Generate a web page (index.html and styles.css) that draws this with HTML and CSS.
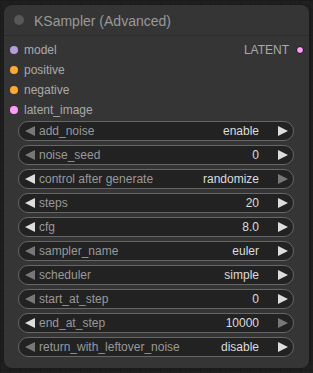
FILE: index.html
```html
<!DOCTYPE html>
<html>
<head>
<meta charset="utf-8">
<link rel="stylesheet" href="styles.css">
</head>
<body>
<div class="node">
  <div class="title"><span class="title-dot"></span><span class="title-text">KSampler (Advanced)</span></div>
  <div class="slots">
    <div class="slot-row">
      <div class="in"><span class="dot model"></span><span class="slot-label">model</span></div>
      <div class="out"><span class="slot-label">LATENT</span><span class="dot out-dot"></span></div>
    </div>
    <div class="slot-row"><div class="in"><span class="dot cond"></span><span class="slot-label">positive</span></div></div>
    <div class="slot-row"><div class="in"><span class="dot cond"></span><span class="slot-label">negative</span></div></div>
    <div class="slot-row"><div class="in"><span class="dot latent"></span><span class="slot-label">latent_image</span></div></div>
  </div>
  <div class="widgets">
    <div class="widget"><svg class="arr dim" viewBox="0 0 10 10"><polygon points="10,0 0,5 10,10"/></svg><span class="w-label">add_noise</span><span class="w-value">enable</span><svg class="arr" viewBox="0 0 10 10"><polygon points="0,0 10,5 0,10"/></svg></div>
    <div class="widget"><svg class="arr dim" viewBox="0 0 10 10"><polygon points="10,0 0,5 10,10"/></svg><span class="w-label">noise_seed</span><span class="w-value">0</span><svg class="arr" viewBox="0 0 10 10"><polygon points="0,0 10,5 0,10"/></svg></div>
    <div class="widget"><svg class="arr" viewBox="0 0 10 10"><polygon points="10,0 0,5 10,10"/></svg><span class="w-label">control after generate</span><span class="w-value">randomize</span><svg class="arr dim" viewBox="0 0 10 10"><polygon points="0,0 10,5 0,10"/></svg></div>
    <div class="widget"><svg class="arr" viewBox="0 0 10 10"><polygon points="10,0 0,5 10,10"/></svg><span class="w-label">steps</span><span class="w-value">20</span><svg class="arr" viewBox="0 0 10 10"><polygon points="0,0 10,5 0,10"/></svg></div>
    <div class="widget"><svg class="arr" viewBox="0 0 10 10"><polygon points="10,0 0,5 10,10"/></svg><span class="w-label">cfg</span><span class="w-value">8.0</span><svg class="arr" viewBox="0 0 10 10"><polygon points="0,0 10,5 0,10"/></svg></div>
    <div class="widget"><svg class="arr dim" viewBox="0 0 10 10"><polygon points="10,0 0,5 10,10"/></svg><span class="w-label">sampler_name</span><span class="w-value">euler</span><svg class="arr" viewBox="0 0 10 10"><polygon points="0,0 10,5 0,10"/></svg></div>
    <div class="widget"><svg class="arr dim" viewBox="0 0 10 10"><polygon points="10,0 0,5 10,10"/></svg><span class="w-label">scheduler</span><span class="w-value">simple</span><svg class="arr" viewBox="0 0 10 10"><polygon points="0,0 10,5 0,10"/></svg></div>
    <div class="widget"><svg class="arr dim" viewBox="0 0 10 10"><polygon points="10,0 0,5 10,10"/></svg><span class="w-label">start_at_step</span><span class="w-value">0</span><svg class="arr" viewBox="0 0 10 10"><polygon points="0,0 10,5 0,10"/></svg></div>
    <div class="widget"><svg class="arr" viewBox="0 0 10 10"><polygon points="10,0 0,5 10,10"/></svg><span class="w-label">end_at_step</span><span class="w-value">10000</span><svg class="arr dim" viewBox="0 0 10 10"><polygon points="0,0 10,5 0,10"/></svg></div>
    <div class="widget"><svg class="arr dim" viewBox="0 0 10 10"><polygon points="10,0 0,5 10,10"/></svg><span class="w-label">return_with_leftover_noise</span><span class="w-value">disable</span><svg class="arr" viewBox="0 0 10 10"><polygon points="0,0 10,5 0,10"/></svg></div>
  </div>
</div>
</body>
</html>
```
FILE: styles.css
```css
html, body {
  margin: 0;
  padding: 0;
}
body {
  background-color: #202020;
  background-image:
    linear-gradient(to right, #1a1a1a 1px, transparent 1px),
    linear-gradient(to bottom, #1a1a1a 1px, transparent 1px);
  background-size: 10px 10px;
  width: 313px;
  height: 373px;
  overflow: hidden;
  font-family: "Liberation Sans", Arial, sans-serif;
  padding-top: 5px;
  padding-left: 4px;
  box-sizing: border-box;
}
.node {
  width: 305px;
  height: 363px;
  background: #353535;
  border-radius: 8px;
  box-sizing: border-box;
  box-shadow: 0 0 3px rgba(0,0,0,0.4);
}
.title {
  height: 30px;
  line-height: 32px;
  display: flex;
  align-items: flex-start;
  border-bottom: 1px solid #2b2b2b;
  color: #999;
  font-size: 14px;
}
.title-dot {
  width: 10px;
  height: 10px;
  border-radius: 50%;
  background: #585858;
  margin: 10px 0 0 10px;
}
.title-text {
  margin-left: 10px;
}
.slots {
  padding-top: 4px;
}
.slot-row {
  height: 20px;
  display: flex;
  justify-content: space-between;
  align-items: center;
  font-size: 12px;
  line-height: 20px;
  color: #aaa;
}
.in {
  display: flex;
  align-items: center;
  padding-left: 6px;
}
.in .slot-label {
  margin-left: 6px;
}
.out {
  display: flex;
  align-items: center;
  padding-right: 5px;
}
.out .slot-label {
  margin-right: 7px;
}
.dot {
  width: 8px;
  height: 8px;
  border-radius: 50%;
  display: inline-block;
}
.model { background: #b39ddb; }
.cond { background: #ffa931; }
.latent { background: #ff9cf9; }
.out-dot {
  width: 6px;
  height: 6px;
  background: #ff9cf9;
  border: 1px solid #111;
}
.widgets {
  margin-top: 1px;
  display: flex;
  flex-direction: column;
  gap: 4px;
  padding-left: 14px;
}
.widget {
  width: 276px;
  height: 20px;
  box-sizing: border-box;
  border: 1px solid #666;
  border-radius: 10px;
  background: #222;
  display: flex;
  align-items: center;
  padding: 0 5px 0 6px;
  font-size: 12px;
  line-height: 18px;
}
.arr {
  width: 10px;
  height: 10px;
  flex: none;
  fill: #ddd;
}
.arr.dim {
  fill: #777;
}
.w-label {
  margin-left: 4px;
  color: #999;
  white-space: nowrap;
}
.w-value {
  flex: 1;
  text-align: right;
  color: #ddd;
  margin-right: 19px;
  white-space: nowrap;
}
```
